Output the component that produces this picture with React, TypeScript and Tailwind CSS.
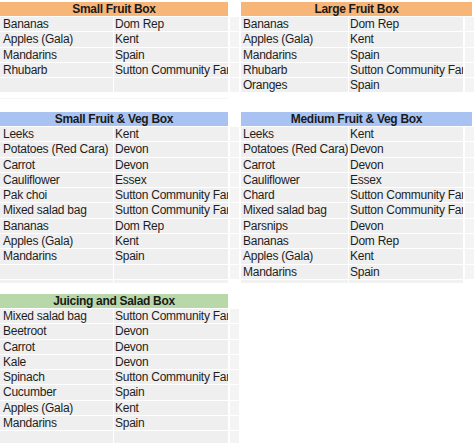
import React from 'react';

type Row = [string, string];

interface BoxProps {
  title: string;
  headerBg: string;
  rows: Row[];
  side: 'left' | 'right';
  emptyRows?: number;
  tail?: boolean;
}

const Box: React.FC<BoxProps> = ({ title, headerBg, rows, side, emptyRows = 0, tail = false }) => {
  const isLeft = side === 'left';
  const c1 = isLeft ? 'w-[113px] pl-[3px]' : 'w-[107px] pl-[2px]';
  const c2 = 'w-[114px] pl-[1px]';
  const all: Row[] = [...rows, ...Array.from({ length: emptyRows }, () => ['', ''] as Row)];

  return (
    <div className="flex flex-col gap-px">
      <div
        className={`${isLeft ? 'w-[228px]' : 'w-[231px]'} h-[14px] ${headerBg} flex items-center justify-center text-[12px] tracking-[-0.3px] font-bold leading-[14px] text-[#1a1a1a]`}
      >
        {title}
      </div>
      {all.map((r, i) => (
        <div key={i} className="flex h-[14.3px] gap-px">
          <div className={`${c1} bg-[#efefef] overflow-hidden whitespace-nowrap leading-[15px]`}>{r[0]}</div>
          <div className={`${c2} bg-[#efefef] overflow-hidden whitespace-nowrap leading-[15px]`}>{r[1]}</div>
          <div className="ml-px w-[9px] bg-[#f4f4f4]" />
        </div>
      ))}
      {tail && (
        <div className="flex h-[3px] gap-px">
          <div className={`${isLeft ? 'w-[113px]' : 'w-[107px]'} bg-[#f2f2f2]`} />
          <div className="w-[114px] bg-[#f2f2f2]" />
        </div>
      )}
    </div>
  );
};

const orange = 'bg-[#f8b578]';
const blue = 'bg-[#a8c3f2]';
const green = 'bg-[#b9d8aa]';

export default function App() {
  return (
    <div
      className="w-[474px] h-[443px] overflow-hidden bg-white text-[12px] tracking-[-0.25px] text-[#1e1e1e]"
      style={{ fontFamily: '"Liberation Sans", Arial, sans-serif' }}
    >
      {/* fruit boxes */}
      <div className="grid grid-cols-[241px_233px] h-[110px] pt-[2px]">
        <div className="flex flex-col">
          <Box
            title="Small Fruit Box"
            headerBg={orange}
            side="left"
            emptyRows={1}
            rows={[
              ['Bananas', 'Dom Rep'],
              ['Apples (Gala)', 'Kent'],
              ['Mandarins', 'Spain'],
              ['Rhubarb', 'Sutton Community Farm'],
            ]}
          />
          <div className="mt-[6px] h-px w-[228px] bg-[#f6f6f6]" />
        </div>
        <Box
          title="Large Fruit Box"
          headerBg={orange}
          side="right"
          rows={[
            ['Bananas', 'Dom Rep'],
            ['Apples (Gala)', 'Kent'],
            ['Mandarins', 'Spain'],
            ['Rhubarb', 'Sutton Community Farm'],
            ['Oranges', 'Spain'],
          ]}
        />
      </div>

      {/* fruit & veg boxes */}
      <div className="grid grid-cols-[241px_233px] h-[182px] pt-[2px]">
        <Box
          title="Small Fruit & Veg Box"
          headerBg={blue}
          side="left"
          emptyRows={1}
          tail
          rows={[
            ['Leeks', 'Kent'],
            ['Potatoes (Red Cara)', 'Devon'],
            ['Carrot', 'Devon'],
            ['Cauliflower', 'Essex'],
            ['Pak choi', 'Sutton Community Farm'],
            ['Mixed salad bag', 'Sutton Community Farm'],
            ['Bananas', 'Dom Rep'],
            ['Apples (Gala)', 'Kent'],
            ['Mandarins', 'Spain'],
          ]}
        />
        <Box
          title="Medium Fruit & Veg Box"
          headerBg={blue}
          side="right"
          tail
          rows={[
            ['Leeks', 'Kent'],
            ['Potatoes (Red Cara)', 'Devon'],
            ['Carrot', 'Devon'],
            ['Cauliflower', 'Essex'],
            ['Chard', 'Sutton Community Farm'],
            ['Mixed salad bag', 'Sutton Community Farm'],
            ['Parsnips', 'Devon'],
            ['Bananas', 'Dom Rep'],
            ['Apples (Gala)', 'Kent'],
            ['Mandarins', 'Spain'],
          ]}
        />
      </div>

      {/* juicing */}
      <div className="grid grid-cols-[241px_233px] pt-[2px]">
        <Box
          title="Juicing and Salad Box"
          headerBg={green}
          side="left"
          emptyRows={1}
          rows={[
            ['Mixed salad bag', 'Sutton Community Farm'],
            ['Beetroot', 'Devon'],
            ['Carrot', 'Devon'],
            ['Kale', 'Devon'],
            ['Spinach', 'Sutton Community Farm'],
            ['Cucumber', 'Spain'],
            ['Apples (Gala)', 'Kent'],
            ['Mandarins', 'Spain'],
          ]}
        />
      </div>
    </div>
  );
}
